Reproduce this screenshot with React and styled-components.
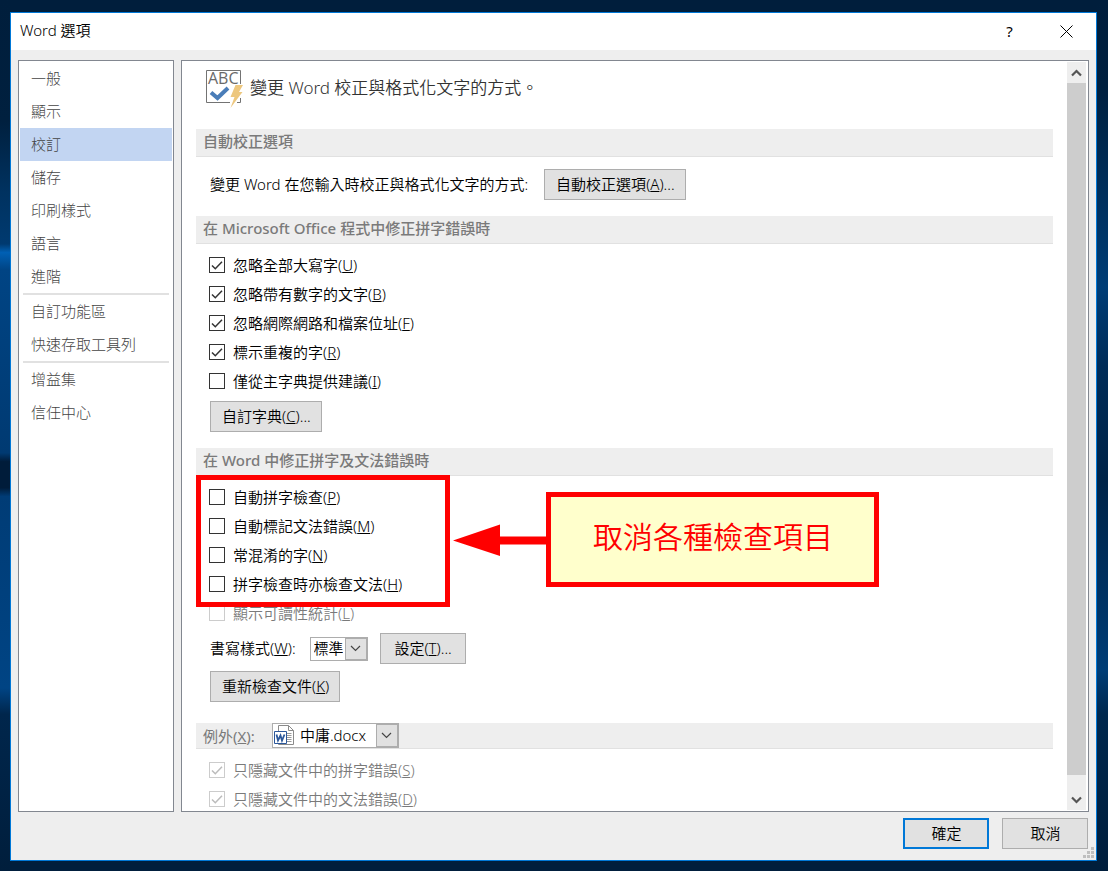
import React, { useState } from 'react'
import styled, { createGlobalStyle } from 'styled-components'

const GlobalStyle = createGlobalStyle`
  *,
  *::before,
  *::after {
    box-sizing: border-box;
  }

  body {
    margin: 0;
    font-family: 'Noto Sans', 'Noto Sans CJK TC', sans-serif;
    font-size: 15px;
    font-weight: 350;
    line-height: 20px;
    color: #000;
  }

  button,
  input,
  select {
    margin: 0;
    font: inherit;
    color: inherit;
  }
`

const Desktop = styled.div`
  display: flex;
  height: 100vh;
  padding: 12px 11px 10px 10px;
  background-color: #001e3c;
  background-image: linear-gradient(
      #001e3c 0%,
      #00203f 14%,
      #003260 22%,
      #003a70 28%,
      #0060b4 29%,
      #004484 31%,
      #003a72 52%,
      #001c3a 53%,
      #001c3a 56%,
      #003c76 57%,
      #004484 79%,
      #00264c 82%,
      #001e3c 100%
    ),
    linear-gradient(
      #001e3c 0%,
      #00203f 10%,
      #003d76 33%,
      #002c58 42%,
      #002448 55%,
      #003466 70%,
      #003d76 77%,
      #00284e 82%,
      #001e3c 100%
    );
  background-repeat: no-repeat;
  background-position: left, right;
  background-size: 10px 100%, 11px 100%;
`
const Window = styled.main`
  display: flex;
  flex: 1;
  flex-direction: column;
  min-width: 0;
  background-color: #eee;
  border: 1px solid #0078d7;
`
const TitleBar = styled.header`
  display: flex;
  align-items: center;
  height: 37px;
  padding: 0 1px 1px 9px;
  background-color: #fff;
`
const Title = styled.h1`
  flex: 1;
  margin: 0;
  padding-bottom: 2px;
  font-size: 15px;
  font-weight: 350;
`
const TitleButton = styled.button`
  display: flex;
  align-items: center;
  justify-content: center;
  width: 57px;
  height: 36px;
  padding: 0;
  font-weight: 400;
  background: none;
  border: none;
`
const Body = styled.div`
  display: flex;
  flex: 1;
  gap: 7px;
  min-height: 0;
  padding: 10px 7px 0;
`
const Sidebar = styled.nav`
  flex: none;
  width: 156px;
  padding: 1px;
  background-color: #fff;
  border: 1px solid #828790;
`
const SidebarLink = styled.a`
  display: block;
  padding: 6px 11px 7px;
  font-weight: 300;
  color: #444;
  text-decoration: none;
  background-color: ${(props) => (props.$active ? '#c2d5f2' : 'transparent')};
`
const Separator = styled.hr`
  height: 2px;
  margin: 0 3px;
  background-color: #e1e1e1;
  border: none;
`
const Panel = styled.section`
  display: flex;
  flex: 1;
  min-width: 0;
  overflow: hidden;
  background-color: #fff;
  border: 1px solid #828790;
`
const Content = styled.div`
  flex: 1;
  min-width: 0;
  padding: 0 14px;
`
const Intro = styled.div`
  display: flex;
  gap: 6px;
  height: 68px;
  padding: 9px 0 0 10px;
`
const IntroText = styled.p`
  margin: 0;
  padding-top: 6px;
  font-size: 17px;
  font-weight: 350;
  line-height: 24px;
  color: #333;
`
const SectionTitle = styled.h2`
  display: flex;
  align-items: center;
  height: 28px;
  margin: 0;
  padding: 0 7px 3px;
  font-size: 15px;
  font-weight: 500;
  color: #7a7a7a;
  background-color: #eee;
  border-bottom: 1px solid #e1e1e1;
`
const ExceptionBar = styled(SectionTitle)`
  gap: 17px;
  height: 26px;
  padding-bottom: 0;
  font-weight: 400;
`
const Group = styled.div`
  position: relative;
  padding: ${(props) => props.$padding};
`
const Line = styled.div`
  display: flex;
  align-items: center;
  gap: ${(props) => (props.$wide ? '16px' : '12px')};
  margin: 5px 0 7px;

  > label,
  > span:first-child {
    padding-bottom: 2px;
  }

  > label {
    padding-right: 2px;
  }
`
const OptionRow = styled.label`
  display: flex;
  align-items: center;
  gap: 8px;
  width: fit-content;
  height: 29px;
  margin-left: -1px;
  padding-bottom: 1px;
  color: ${(props) => (props.$disabled ? '#7a7a7a' : '#000')};
`
const CheckFrame = styled.span`
  display: grid;
  width: 16px;
  height: 16px;

  > * {
    grid-area: 1 / 1;
  }

  svg {
    pointer-events: none;
  }
`
const CheckInput = styled.input`
  width: 16px;
  height: 16px;
  appearance: none;
  background-color: #fff;
  border: 1px solid #333;

  &:disabled {
    border-color: #ccc;
  }
`
const Button = styled.button`
  min-width: 86px;
  height: 31px;
  padding: 0 10px 1px 11px;
  white-space: nowrap;
  background-color: #e1e1e1;
  border: ${(props) => (props.$primary ? '2px solid #0078d7' : '1px solid #adadad')};
`
const Combo = styled.span`
  display: flex;
  align-items: center;
  width: ${(props) => props.$width};
  height: ${(props) => props.$height};
  padding-left: 1px;
  font-weight: 350;
  color: #000;
  background-color: #fff;
  border: 1px solid #adadad;
`
const ComboSelect = styled.select`
  flex: 1;
  min-width: 0;
  height: 100%;
  padding: ${(props) => (props.$wide ? '0 5px 2px' : '0 2px 2px')};
  appearance: none;
  background: none;
  border: none;
`
const ComboArrow = styled.span`
  display: flex;
  align-items: center;
  justify-content: center;
  width: 22px;
  height: 100%;
  background-color: #e1e1e1;
  border: 1px solid #adadad;
`
const Highlight = styled.div`
  position: absolute;
  top: -1px;
  left: 0;
  width: 254px;
  height: 132px;
  border: 5px solid #f00;
  pointer-events: none;
`
const Callout = styled.aside`
  position: absolute;
  top: 16px;
  left: 257px;
  display: flex;
  align-items: center;
`
const CalloutText = styled.p`
  margin: 0;
  padding: 20px 41px 25px 42px;
  font-size: 30px;
  font-weight: 350;
  line-height: 40px;
  color: #f00;
  white-space: nowrap;
  background-color: #ffc;
  border: 5px solid #f00;
`
const Scrollbar = styled.div`
  display: flex;
  flex: none;
  flex-direction: column;
  width: 19px;
  margin: 1px 2px 1px 0;
  background-color: #eee;
`
const ScrollButton = styled.button`
  display: flex;
  align-items: center;
  justify-content: center;
  height: 21px;
  padding: 0;
  background: none;
  border: none;
`
const ScrollTrack = styled.div`
  flex: 1;
`
const ScrollThumb = styled.div`
  height: 98%;
  background-color: #cdcdcd;
`
const Footer = styled.footer`
  display: flex;
  justify-content: flex-end;
  gap: 13px;
  height: 48px;
  padding: 6px 8px 0;
`
const Grip = styled.svg`
  position: absolute;
  right: 14px;
  bottom: 13px;
`

const navGroups = [
  ['一般', '顯示', '校訂', '儲存', '印刷樣式', '語言', '進階'],
  ['自訂功能區', '快速存取工具列'],
  ['增益集', '信任中心'],
]

const officeOptions = [
  { label: '忽略全部大寫字', hotkey: 'U', checked: true },
  { label: '忽略帶有數字的文字', hotkey: 'B', checked: true },
  { label: '忽略網際網路和檔案位址', hotkey: 'F', checked: true },
  { label: '標示重複的字', hotkey: 'R', checked: true },
  { label: '僅從主字典提供建議', hotkey: 'I' },
]

const wordOptions = [
  { label: '自動拼字檢查', hotkey: 'P' },
  { label: '自動標記文法錯誤', hotkey: 'M' },
  { label: '常混淆的字', hotkey: 'N' },
  { label: '拼字檢查時亦檢查文法', hotkey: 'H' },
  { label: '顯示可讀性統計', hotkey: 'L', disabled: true },
]

const exceptionOptions = [
  { label: '只隱藏文件中的拼字錯誤', hotkey: 'S', checked: true, disabled: true },
  { label: '只隱藏文件中的文法錯誤', hotkey: 'D', checked: true, disabled: true },
]

function Hotkey({ children }) {
  return (
    <>
      (<u>{children}</u>)
    </>
  )
}

function Option({ label, hotkey, checked = false, disabled }) {
  const [value, setValue] = useState(checked)

  return (
    <OptionRow $disabled={disabled}>
      <CheckFrame>
        <CheckInput
          type='checkbox'
          checked={value}
          disabled={disabled}
          onChange={(e) => setValue(e.currentTarget.checked)}
        />
        {value && (
          <svg width='16' height='16' viewBox='0 0 16 16' fill='none'>
            <path
              d='M3 8.5 L6.3 11.8 L13 4.8'
              stroke={disabled ? '#bbb' : '#333'}
              strokeWidth='1.5'
            />
          </svg>
        )}
      </CheckFrame>
      <span>
        {label}
        <Hotkey>{hotkey}</Hotkey>
      </span>
    </OptionRow>
  )
}

function Chevron() {
  return (
    <svg width='11' height='7' viewBox='0 0 11 7' fill='none'>
      <path d='M1 1 L5.5 5.5 L10 1' stroke='#444' strokeWidth='1.2' />
    </svg>
  )
}

function ScrollArrow({ down }) {
  return (
    <svg width='11' height='8' viewBox='0 0 11 8' fill='none'>
      <path
        d={down ? 'M1 1.5 L5.5 6 L10 1.5' : 'M1 6.5 L5.5 2 L10 6.5'}
        stroke='#555'
        strokeWidth='2.2'
      />
    </svg>
  )
}

function ProofingIcon() {
  return (
    <svg width='38' height='38' viewBox='0 0 38 38' fill='none' overflow='visible'>
      <path d='M34.5 14 V0.5 H0.5 V32.5 H24' stroke='#737373' />
      <path d='M31 32.5 H34.5 V28' stroke='#737373' />
      <text
        x='2'
        y='14'
        fontSize='16'
        fontFamily='Open Sans, sans-serif'
        fontWeight='400'
        fill='#6a6a6a'
      >
        ABC
      </text>
      <path d='M5 22.5 L11.5 28 L22 18' stroke='#4a7db8' strokeWidth='4' />
      <path
        d='M29.5 15 H37 L33 22 H36.5 L24.5 38 L28.5 27 H24.5 Z'
        fill='#edc77e'
      />
    </svg>
  )
}

function WordFileIcon() {
  return (
    <svg width='21' height='21' viewBox='0 0 21 21' fill='none'>
      <path d='M4.5 0.5 H14.5 L19.5 5.5 V19.5 H4.5 Z' fill='#fff' stroke='#8a8a8a' />
      <path d='M14.5 0.5 V5.5 H19.5' stroke='#8a8a8a' />
      <path
        d='M13 8.5 H17.5 M13 10.5 H17.5 M13 12.5 H17.5 M13 14.5 H17.5 M13 16.5 H17.5'
        stroke='#999'
      />
      <path d='M0.5 6.5 H12.5 V18.5 H0.5 Z' fill='#fff' stroke='#2b579a' />
      <path
        d='M2.5 9.5 L4 15.5 L6.5 10.5 L8 15.5 L10.5 9.5'
        stroke='#2b579a'
        strokeWidth='1.8'
      />
    </svg>
  )
}

export default function App() {
  const [section, setSection] = useState('校訂')

  return (
    <Desktop>
      <GlobalStyle />
      <Window>
        <TitleBar>
          <Title>Word 選項</Title>
          <TitleButton type='button'>?</TitleButton>
          <TitleButton type='button' aria-label='關閉'>
            <svg width='13' height='13' viewBox='0 0 13 13' fill='none'>
              <path d='M0.5 0.5 L12.5 12.5 M12.5 0.5 L0.5 12.5' stroke='#000' />
            </svg>
          </TitleButton>
        </TitleBar>
        <Body>
          <Sidebar>
            {navGroups.map((group, index) => (
              <React.Fragment key={group[0]}>
                {index > 0 && <Separator />}
                {group.map((name) => (
                  <SidebarLink
                    key={name}
                    href='#'
                    $active={name === section}
                    onClick={(e) => {
                      e.preventDefault()
                      setSection(name)
                    }}
                  >
                    {name}
                  </SidebarLink>
                ))}
              </React.Fragment>
            ))}
          </Sidebar>
          <Panel>
            <Content>
              <Intro>
                <ProofingIcon />
                <IntroText>變更 Word 校正與格式化文字的方式。</IntroText>
              </Intro>

              <SectionTitle>自動校正選項</SectionTitle>
              <Group $padding='7px 14px 9px'>
                <Line $wide>
                  <span>變更 Word 在您輸入時校正與格式化文字的方式:</span>
                  <Button type='button'>
                    自動校正選項
                    <Hotkey>A</Hotkey>...
                  </Button>
                </Line>
              </Group>

              <SectionTitle>在 Microsoft Office 程式中修正拼字錯誤時</SectionTitle>
              <Group $padding='7px 14px 9px'>
                {officeOptions.map((option) => (
                  <Option key={option.hotkey} {...option} />
                ))}
                <Line>
                  <Button type='button'>
                    自訂字典
                    <Hotkey>C</Hotkey>...
                  </Button>
                </Line>
              </Group>

              <SectionTitle>在 Word 中修正拼字及文法錯誤時</SectionTitle>
              <Group $padding='7px 14px 14px'>
                {wordOptions.map((option) => (
                  <Option key={option.hotkey} {...option} />
                ))}
                <Line>
                  <label htmlFor='writing-style'>
                    書寫樣式
                    <Hotkey>W</Hotkey>:
                  </label>
                  <Combo $width='58px' $height='24px'>
                    <ComboSelect id='writing-style'>
                      <option>標準</option>
                    </ComboSelect>
                    <ComboArrow>
                      <Chevron />
                    </ComboArrow>
                  </Combo>
                  <Button type='button'>
                    設定
                    <Hotkey>T</Hotkey>...
                  </Button>
                </Line>
                <Line>
                  <Button type='button'>
                    重新檢查文件
                    <Hotkey>K</Hotkey>
                  </Button>
                </Line>
                <Highlight />
                <Callout>
                  <svg width='93' height='33' viewBox='0 0 93 33'>
                    <path d='M0 17.5 L47 1.5 V13.5 H93 V21.5 H47 V33 Z' fill='#f00' />
                  </svg>
                  <CalloutText>取消各種檢查項目</CalloutText>
                </Callout>
              </Group>

              <ExceptionBar>
                <label htmlFor='exception-file'>
                  例外
                  <Hotkey>X</Hotkey>:
                </label>
                <Combo $width='127px' $height='25px'>
                  <WordFileIcon />
                  <ComboSelect id='exception-file' $wide>
                    <option>中庸.docx</option>
                  </ComboSelect>
                  <ComboArrow>
                    <Chevron />
                  </ComboArrow>
                </Combo>
              </ExceptionBar>
              <Group $padding='7px 14px 0'>
                {exceptionOptions.map((option) => (
                  <Option key={option.hotkey} {...option} />
                ))}
              </Group>
            </Content>
            <Scrollbar>
              <ScrollButton type='button' aria-label='向上捲動'>
                <ScrollArrow />
              </ScrollButton>
              <ScrollTrack>
                <ScrollThumb />
              </ScrollTrack>
              <ScrollButton type='button' aria-label='向下捲動'>
                <ScrollArrow down />
              </ScrollButton>
            </Scrollbar>
          </Panel>
        </Body>
        <Footer>
          <Button type='button' $primary>
            確定
          </Button>
          <Button type='button'>取消</Button>
        </Footer>
        <Grip width='11' height='11' viewBox='0 0 11 11' fill='#bfbfbf'>
          <path d='M8 0h3v3h-3z M8 4h3v3h-3z M8 8h3v3h-3z M4 4h3v3h-3z M4 8h3v3h-3z M0 8h3v3h-3z' />
        </Grip>
      </Window>
    </Desktop>
  )
}
